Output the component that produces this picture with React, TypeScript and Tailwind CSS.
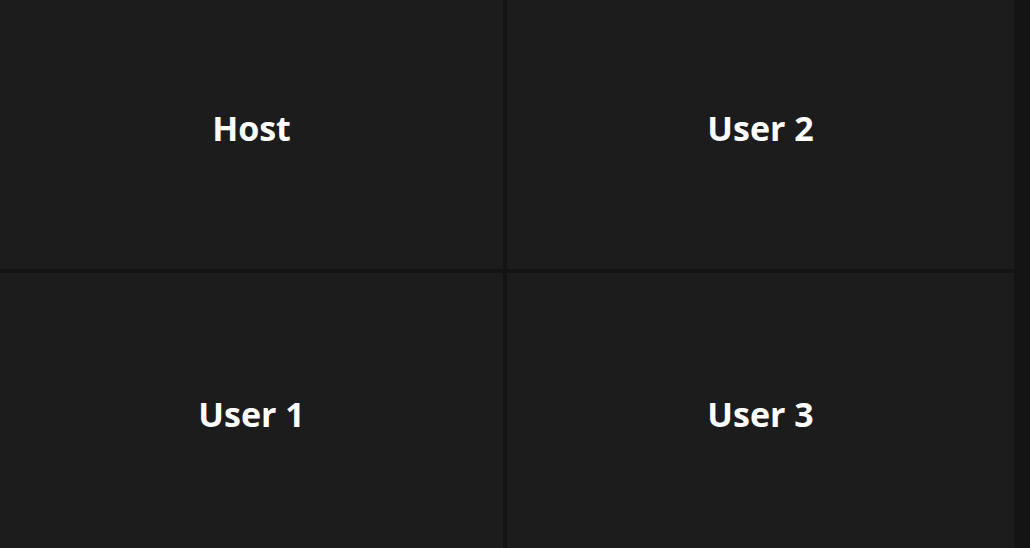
const tiles = ["Host", "User 2", "User 1", "User 3"];

export default function App() {
  return (
    <div className="h-[548px] w-full overflow-hidden bg-[#141414]">
      <div className="-mt-[13px] grid w-[1014px] grid-cols-[503px_507px] grid-rows-[282px_282px] gap-[4px]">
        {tiles.map((name) => (
          <div
            key={name}
            className="flex items-center justify-center bg-[#1c1c1c]"
          >
            <span className="font-['Open_Sans',sans-serif] text-[34px] font-bold text-white">
              {name}
            </span>
          </div>
        ))}
      </div>
    </div>
  );
}
